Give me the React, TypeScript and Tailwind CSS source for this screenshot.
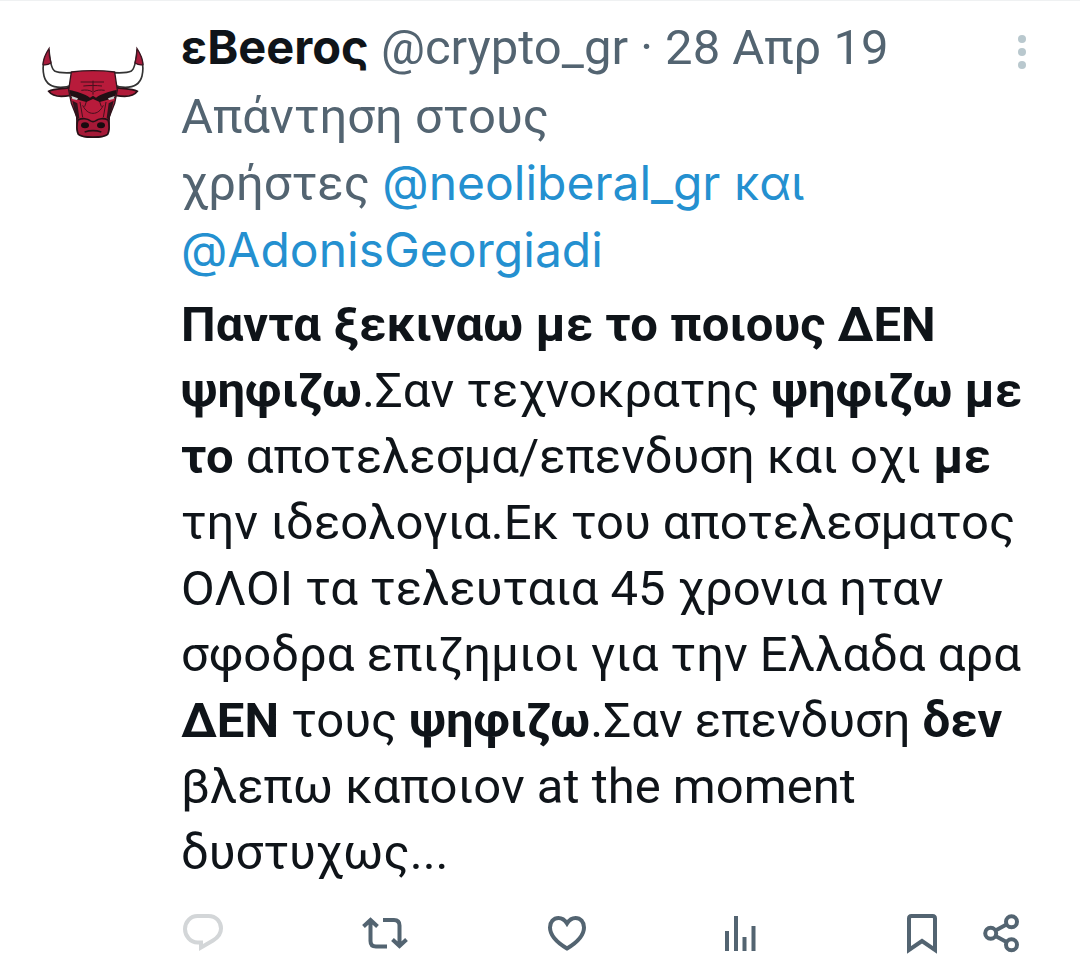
import React from "react";

const tweet = {
  name: "εBeeroς",
  handle: "@crypto_gr",
  date: "28 Απρ 19",
};

function BullAvatar() {
  return (
    <svg
      viewBox="36 48 306 276"
      className="h-[92px] w-[102px]"
      role="img"
      aria-label="avatar"
    >
      {/* Horns */}
      <path
        d="M57 60C42 82 36 112 42 138c6 24 26 34 50 34 14 0 24-2 32-6l4-38c-20 1-42 2-54-5-12-8-15-38-17-63z"
        fill="#fff"
        stroke="#333"
        strokeWidth="5"
        strokeLinejoin="round"
      />
      <path
        d="M321 60c15 22 21 52 15 78-6 24-26 34-50 34-14 0-24-2-32-6l-4-38c20 1 42 2 54-5 12-8 15-38 17-63z"
        fill="#fff"
        stroke="#333"
        strokeWidth="5"
        strokeLinejoin="round"
      />
      <path d="M57 56c-12 18-17 32-18 48 8 2 16 0 24-5-4-13-6-26-6-43z" fill="#a81c3c" stroke="#3a1520" strokeWidth="4" />
      <path d="M321 56c12 18 17 32 18 48-8 2-16 0-24-5 4-13 6-26 6-43z" fill="#a81c3c" stroke="#3a1520" strokeWidth="4" />
      {/* Ears */}
      <path
        d="M122 172c-22 6-46 2-66 12 10 14 36 18 66 12zM256 172c22 6 46 2 66 12-10 14-36 18-66 12z"
        fill="#b01a39"
        stroke="#2a1218"
        strokeWidth="5"
      />
      {/* Head */}
      <path
        d="M124 126c40-5 90-5 130 0l8 54-8 40-16 40-1 38c-2 18-20 25-48 25s-46-7-48-25l-1-38-16-40-8-40z"
        fill="#b81b3b"
        stroke="#30151d"
        strokeWidth="4"
      />
      {/* Forehead lines */}
      <g fill="none" stroke="#43101d" strokeWidth="3">
        <path d="M152 156h70M160 168c18-2 38-2 56 0M154 181c14-2 24-1 32 4M192 185c8-5 18-6 32-4M189 152v42" />
        <path d="M158 226c8 16 18 24 31 24s23-8 31-24M150 216l8 46M228 216l-8 46M170 212l-6 18M208 212l6 18" />
      </g>
      {/* Brows and eyes */}
      <path
        d="M118 180c22 4 46 12 62 23l9-6 9 6c16-11 40-19 62-23l-5 24c-20 4-30 8-46 12l-20-9-20 9c-16-4-26-8-46-12z"
        fill="#201014"
      />
      <path d="M124 198l20 7-3 5-14-3zM254 198l-20 7 3 5 14-3z" fill="#cfcfcf" />
      <path d="M127 212l15 8 6 44-8 6-6-26zM251 212l-15 8-6 44 8 6 6-26z" fill="#30131b" />
      {/* Muzzle */}
      <path
        d="M144 270c14-7 29-4 36 2 6 4 12 4 18 0 7-6 22-9 36-2 5 11 4 34-1 43-12 11-76 11-88 0-5-9-6-32-1-43z"
        fill="#a51937"
        stroke="#261016"
        strokeWidth="5"
      />
      <ellipse cx="165" cy="286" rx="12" ry="9" fill="#180b0f" />
      <ellipse cx="213" cy="286" rx="12" ry="9" fill="#180b0f" />
      <path d="M164 306c16-5 34-5 50 0" fill="none" stroke="#260f16" strokeWidth="5" />
    </svg>
  );
}

function ReplyIcon() {
  return (
    <svg viewBox="0 0 44 44" className="h-11 w-11" fill="none" stroke="currentColor" strokeWidth="4">
      <path d="M16.500 4h11C35 4 40 9.500 40 16.500c0 5-3 9-8 12L20 35.500v-5h-3.500C9.500 30.500 4 24 4 17S9.500 4 16.500 4z" />
    </svg>
  );
}

function RetweetIcon() {
  return (
    <svg viewBox="0 0 46 44" className="h-11 w-[46px]" fill="none" stroke="currentColor" strokeWidth="4">
      <path d="M1.500 14.500l7-6.500 7 6.500M8.500 8.500V29c0 3.500 2 5.500 5.500 5.500h11M21 8h11c3.500 0 5.500 2 5.500 5.500V33M30.500 27.500l7 6.500 7-6.500" />
    </svg>
  );
}

function LikeIcon() {
  return (
    <svg viewBox="0 0 44 44" className="h-11 w-12" fill="none" stroke="currentColor" strokeWidth="4">
      <path d="M22 11.500C19.500 7.500 16.500 6 13.500 6 8.500 6 5 10 5 15.500 5 23.500 12 30.500 22 36.500c10-6 17-13 17-21C39 10 35.500 6 30.500 6c-3 0-6 1.500-8.500 5.500z" />
    </svg>
  );
}

function ViewsIcon() {
  return (
    <svg viewBox="0 0 33 44" className="h-11 w-[33px]" fill="none" stroke="currentColor" strokeWidth="4">
      <path d="M3 19v20M12 4v35M20.500 25v14M29.500 14v25" />
    </svg>
  );
}

function BookmarkIcon() {
  return (
    <svg viewBox="0 0 34 44" className="h-11 w-[34px]" fill="none" stroke="currentColor" strokeWidth="4">
      <path d="M4 38V6.500C4 5 5 4 6.500 4h21C29 4 30 5 30 6.500V38L17 29z" />
    </svg>
  );
}

function ShareIcon() {
  return (
    <svg viewBox="0 0 37 44" className="h-11 w-[37px]" fill="none" stroke="currentColor" strokeWidth="4">
      <circle cx="7.700" cy="21.300" r="5.500" />
      <circle cx="28.500" cy="9.700" r="5.500" />
      <circle cx="28.500" cy="32.700" r="5.500" />
      <path d="M12.500 18.500l11-6M12.500 24l11 6" />
    </svg>
  );
}

const actions = [
  { label: "Reply", icon: ReplyIcon, className: "flex-1 text-[#d3d6d8]" },
  { label: "Retweet", icon: RetweetIcon, className: "flex-1" },
  { label: "Like", icon: LikeIcon, className: "flex-1" },
  { label: "Views", icon: ViewsIcon, className: "flex-1" },
];

export default function App() {
  return (
    <article
      lang="el"
      className="flex min-h-screen gap-[37px] border-t border-[#eff1f2] bg-white pr-[60px] pl-[42px] font-['Roboto','Noto_Sans',sans-serif] text-[49px] leading-[66px] text-[#0f1419]"
    >
      <a href="#profile" className="mt-[45px] shrink-0 self-start">
        <BullAvatar />
      </a>

      <div className="min-w-0 flex-1 pt-[13px]">
        {/* Header */}
        <header className="flex items-center justify-between text-[#536471]">
          <div className="whitespace-nowrap">
            <a
              href="#profile"
              className="font-['Inter',sans-serif] text-[47px] font-bold text-[#0f1419]"
            >
              {tweet.name}
            </a>{" "}
            <span>
              {tweet.handle} · {tweet.date}
            </span>
          </div>
          <button type="button" aria-label="More" className="-mr-2 pt-2 text-[#b9c8ce]">
            <svg viewBox="0 0 12 36" className="h-9 w-3" fill="currentColor">
              <circle cx="6" cy="5" r="4" />
              <circle cx="6" cy="18" r="4" />
              <circle cx="6" cy="31" r="4" />
            </svg>
          </button>
        </header>

        {/* Replying to */}
        <p className="mt-[3px] whitespace-nowrap text-[#536471]">
          Απάντηση στους
          <br />
          χρήστες{" "}
          <span className="font-['Inter',sans-serif] text-[48px] text-[#2490d0]">
            <a href="#neoliberal_gr">@neoliberal_gr</a> και
            <br />
            <a href="#AdonisGeorgiadi">@AdonisGeorgiadi</a>
          </span>
        </p>

        <p className="mt-2 whitespace-nowrap">
          <b>Παντα ξεκιναω με το ποιους ΔΕΝ</b>
          <br />
          <b>ψηφιζω</b>.Σαν τεχνοκρατης <b>ψηφιζω με</b>
          <br />
          <b>το</b> αποτελεσμα/επενδυση και οχι <b>με</b>
          <br />
          την ιδεολογια.Εκ του αποτελεσματος
          <br />
          ΟΛΟΙ τα τελευταια 45 χρονια ηταν
          <br />
          σφοδρα επιζημιοι για την Ελλαδα αρα
          <br />
          <b>ΔΕΝ</b> τους <b>ψηφιζω</b>.Σαν επενδυση <b>δεν</b>
          <br />
          βλεπω καποιον at the moment
          <br />
          δυστυχως...
        </p>

        {/* Actions */}
        <div className="mt-[26px] flex text-[#536471]">
          {actions.map(({ label, icon: Icon, className }) => (
            <div key={label} className={className}>
              <button type="button" aria-label={label} className="block">
                <Icon />
              </button>
            </div>
          ))}
          <div className="flex gap-11">
            <button type="button" aria-label="Bookmark">
              <BookmarkIcon />
            </button>
            <button type="button" aria-label="Share">
              <ShareIcon />
            </button>
          </div>
        </div>
      </div>
    </article>
  );
}
